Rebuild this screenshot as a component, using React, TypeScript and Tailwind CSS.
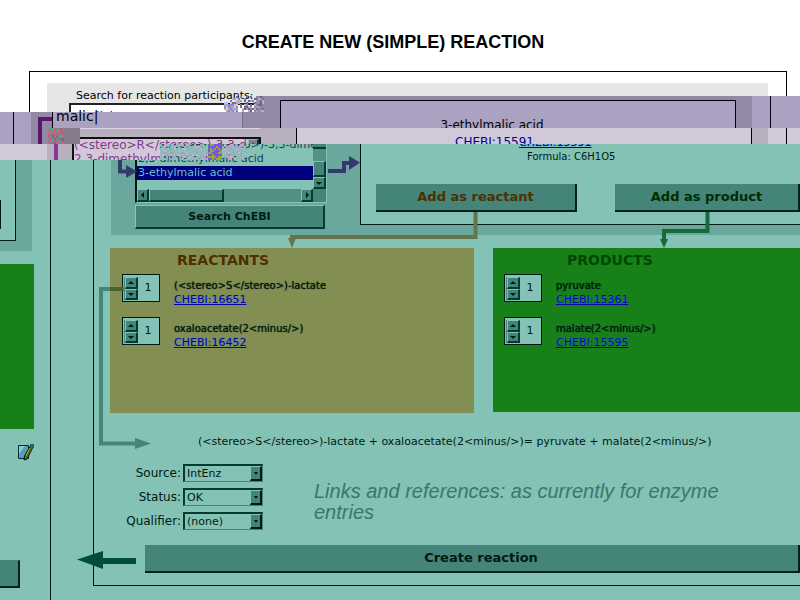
import type { ReactNode } from "react";

type Participant = { name: string; id: string };

const reactants: Participant[] = [
  { name: "(<stereo>S</stereo>)-lactate", id: "CHEBI:16651" },
  { name: "oxaloacetate(2<minus/>)", id: "CHEBI:16452" },
];
const products: Participant[] = [
  { name: "pyruvate", id: "CHEBI:15361" },
  { name: "malate(2<minus/>)", id: "CHEBI:15595" },
];

/* A patch of scrambled pixels, the same on every render. */
function Scramble({ w, h, colors, className, density = 1 }: { w: number; h: number; colors: string[]; className: string; density?: number }) {
  const cells: ReactNode[] = [];
  let seed = w * 31 + h * 7;
  const next = () => {
    seed = (seed * 1103515245 + 12345) % 2147483648;
    return seed / 2147483648;
  };
  for (let y = 0; y < h; y += 2) {
    for (let x = 0; x < w; x += 2) {
      const fill = colors[Math.floor(next() * colors.length)];
      if (next() < density) cells.push(<rect key={x + "-" + y} x={x} y={y} width="2" height="2" fill={fill} />);
    }
  }
  return (
    <svg aria-hidden="true" width={w} height={h} className={className} shapeRendering="crispEdges">
      {cells}
    </svg>
  );
}

function Triangle({ dir }: { dir: "up" | "down" | "left" | "right" }) {
  const d = { up: "M0 4L3 1L6 4Z", down: "M0 2L6 2L3 5Z", left: "M4 0L1 3L4 6Z", right: "M2 0L5 3L2 6Z" }[dir];
  return (
    <svg aria-hidden="true" width="6" height="6" className="shrink-0">
      <path d={d} fill="#001a12" />
    </svg>
  );
}

function SmallButton({ dir, label, className }: { dir: "up" | "down" | "left" | "right"; label: string; className: string }) {
  return (
    <button
      aria-label={label}
      className={
        "flex items-center justify-center overflow-hidden border-2 border-t-[#84c4b9] border-l-[#84c4b9] border-r-[#003c32] border-b-[#003c32] border-t border-l " +
        className
      }
    >
      <Triangle dir={dir} />
    </button>
  );
}

function ParticipantRow({ p }: { p: Participant }) {
  return (
    <div className="flex h-[43px] gap-[14px]">
      <div className="flex h-7 w-[38px] shrink-0 border border-[#001a12] bg-[#84c2b6] pl-px pt-0.5">
        <div className="flex h-[23px] w-3.5 flex-col border-l border-[#458478]">
          <SmallButton dir="up" label={"Increase " + p.name} className="h-3 w-[13px] bg-[#458478]" />
          <SmallButton dir="down" label={"Decrease " + p.name} className="h-[11px] w-[13px] bg-[#458478]" />
        </div>
        <input aria-label={"Coefficient of " + p.name} defaultValue="1" className="h-5 w-5 bg-transparent text-center text-[11px] outline-none" />
      </div>
      <div className="pt-[5px] leading-[13px]">
        <div className="whitespace-nowrap text-[10px] leading-[14px] text-[#001a12] [text-shadow:0_0_1px_#001a12]">{p.name}</div>
        <a href="#chebi" className="block text-[11px] text-[#0008a0] underline [text-shadow:0_0_1px_#3d7cff]">
          {p.id}
        </a>
      </div>
    </div>
  );
}

function SelectRow({ id, label, value }: { id: string; label: string; value: string }) {
  return (
    <div className="flex h-6 items-center">
      <label htmlFor={id} className="w-[72px] pr-0.5 text-right text-[12px]">
        {label}
      </label>
      <div className="relative">
        <select
          id={id}
          className="block h-[18px] w-20 appearance-none border-2 border-r border-b border-t-[#003c32] border-l-[#003c32] border-r-[#458478] border-b-[#458478] bg-[#84c2b6] pl-0.5 text-[11px] leading-[14px] outline-none"
        >
          <option>{value}</option>
        </select>
        <span className="pointer-events-none absolute right-px top-0.5 flex h-[15px] w-3 items-center justify-center border-2 border-t border-l border-t-[#84c4b9] border-l-[#84c4b9] border-r-[#001a12] border-b-[#001a12] bg-[#458478]">
          <svg aria-hidden="true" width="4" height="3">
            <path d="M0 0H4L2 3Z" fill="#001a12" />
          </svg>
        </span>
      </div>
    </div>
  );
}

const bigButton =
  "h-7 border-r-2 border-b-2 border-[#00241c] bg-[#458478] text-center font-bold leading-[26px] whitespace-nowrap ";

export default function App() {
  return (
    <div className="flex min-h-screen flex-col overflow-hidden bg-white font-['DejaVu_Sans',sans-serif] text-[#001a12]">
      {/* Heading and the top of the outer frame */}
      <header className="h-28 overflow-hidden text-black">
        <h1 className="h-[71px] pr-[14px] pt-[30px] text-center font-['Liberation_Sans',sans-serif] text-[18px] font-bold leading-6">
          CREATE NEW (SIMPLE) REACTION
        </h1>
        <div className="ml-[29px] mr-[13px] border border-b-0 border-black pl-[17px] pr-[18px] pt-[11px]">
          <div className="bg-[#e6e6e6] pl-[22px] pt-[5px]">
            <label htmlFor="search" className="block h-[15px] pl-[7px] text-[11px] leading-[15px]">
              Search for reaction participants:
            </label>
            <input
              id="search"
              defaultValue="malic|"
              className="block h-6 w-[190px] border-2 border-r border-[#222] bg-white pl-1.5 pt-1 text-[12px] outline-none"
            />
          </div>
        </div>
      </header>

      {/* First displaced band */}
      <div className="relative z-10 flex h-4 items-start bg-[#aaa2c0] text-black">
        <div className="flex h-8 w-20 shrink-0 bg-[#aaa2c0]">
          <div className="w-[14px] border-r border-[#001]" />
          <div className="w-[17px]" />
          <div className="w-[21px] bg-[#9289a5]" />
          <div className="relative w-7">
            <div className="h-4 whitespace-nowrap border-l border-black pl-[3px] text-[14px] leading-[9px]">malic|</div>
            <Scramble w={16} h={16} className="absolute -left-1 top-4" colors={["#c06a8c", "#5aa08c", "#8d7a8d", "#d05a70", "#7a6c80"]} />
            <div className="absolute left-3 top-4 h-4 w-4 bg-[#857b8c]" />
          </div>
          <svg aria-hidden="true" width="16" height="32" className="absolute left-[38px] top-0">
            <path d="M14 7H2V32" fill="none" stroke="#5c166f" strokeWidth="4" />
          </svg>
        </div>
        <div className="h-4 w-[163px] shrink-0 border-r border-[#777087]" />
        <div className="h-4 w-[13px] shrink-0 bg-[#9289a5]" />
        <div className="-mt-4 flex h-8 flex-1 bg-[#9289a5] pl-6 pt-1">
          <div className="flex-1 overflow-hidden border border-b-0 border-[#001] bg-[#aaa2c0] pr-8 pt-4 text-center text-[12px] leading-4">
            3-ethylmalic acid
          </div>
          <div className="w-4" />
          <div className="-mt-1 h-8 w-[19px] border-r border-[#001] bg-[#aaa2c0]" />
          <div className="-mt-1 h-8 w-[29px] bg-[#aaa2c0]" />
        </div>
        <Scramble w={34} h={16} density={0.6} className="absolute -top-4 left-[230px]" colors={["#8f86a4", "#b9b0c8", "#77708c", "#a79fba", "#6b6380"]} />
        <Scramble w={14} h={10} density={0.7} className="absolute -top-2.5 left-[224px]" colors={["#8b80e8", "#b0b080", "#c9c2ff"]} />
      </div>

      {/* Second displaced band */}
      <div className="flex h-4 bg-[#d1c9d9]">
        <div className="h-8 w-[296px] shrink-0 bg-[#b8b0be]">
          <div className="ml-[72px] h-[9px] w-[188px] border-t border-[#ddd6e4]" />
          <div className="ml-[72px] flex h-6 w-[189px] justify-between overflow-hidden border-2 border-b-0 border-[#111] bg-[#d1c9d9] text-[12px] leading-3 text-[#843a8c]">
            <div className="w-[174px] overflow-hidden whitespace-nowrap">{"(<stereo>R</stereo>)-3,3-dimethylmalic acid"}</div>
            <SmallButton dir="up" label="Scroll list up" className="h-3 w-[11px] bg-[#857b8c]" />
          </div>
        </div>
        <div className="flex-1 overflow-hidden border-x border-black pl-[158px] text-[12px] leading-7 text-[#000096]">CHEBI:15591</div>
        <div className="w-4 bg-[#b8b0be]" />
        <div className="w-[19px] border-r border-black" />
        <div className="w-[13px]" />
      </div>

      <main className="relative flex flex-1 bg-[#84c2b6]">
        {/* Leftover of the second band, lying over the main area */}
        <div className="absolute left-0 top-0 z-10 flex h-4 w-40 bg-[#d1c9d9]">
          <div className="w-[47px]" />
          <div className="w-[25px] bg-[#b8b0be] pl-[7px]">
            <div className="h-4 w-1 bg-[#843a8c]" />
          </div>
          <div className="flex-1 overflow-hidden whitespace-nowrap border-l-2 border-[#111] text-[12px] text-[#843a8c]">
            <div className="-mt-[5px] leading-3">{"(<stereo>R</stereo>)"}</div>
            <div className="leading-4">2,3-dimethylmalic acid</div>
          </div>
        </div>
        <Scramble
          w={86}
          h={16}
          density={0.6}
          className="absolute left-40 top-0 z-10"
          colors={["#b49cc4", "#c9a5c8", "#8fb8b8", "#7fc8b8", "#c8b0d0", "#a8a0c0", "#7cc4b8", "#bca8cc"]}
        />
        <Scramble w={14} h={16} className="absolute left-[208px] top-0 z-10" colors={["#7a50e8", "#a8a820", "#6a60d0", "#90a060"]} />

        {/* Strip at the left edge */}
        <aside className="w-[51px] shrink-0 border-r border-[#001a12]">
          <div className="h-[107px] w-8 bg-[#6aa89d]">
            <div className="h-[97px] w-4 border-r border-b border-[#001a12] bg-[#84c2b6] pt-14">
              <div className="h-[29px] w-px bg-[#001a12]" />
            </div>
          </div>
          <div className="mt-[13px] h-[165px] w-[34px] bg-[#178018]" />
          <svg aria-label="Edit" role="img" width="16" height="17" className="ml-[18px] mt-[15px]">
            <path d="M.5 1.5H10.5V14.5H.5Z" fill="#5b9db0" stroke="#002a38" />
            <path d="M1 2H7L1 10Z" fill="#8cc6dc" />
            <path d="M13 1L15 3L9 15L6 16L6.500 12Z" fill="#4d7018" stroke="#001a12" />
            <path d="M12 4L8 12" stroke="#a0b040" />
            <path d="M12 1H15V4" fill="none" stroke="#286068" strokeWidth="2" />
          </svg>
          <button aria-label="Submit" className="mt-[99px] block h-7 w-5 border-r-2 border-b-2 border-t border-[#00241c] border-t-[#458478] bg-[#458478]" />
        </aside>

        <div className="min-w-0 flex-1 pb-[14px] pl-[42px]">
          <div className="relative h-full border-b border-l border-[#001a12] pl-4">
            {/* Search results and the selected compound */}
            <section className="ml-px flex h-[91px] bg-[#6aa89d] pl-6">
              <div className="w-[192px] shrink-0">
                <div className="flex h-[59px] border-b border-l-2 border-r border-l-[#001a12] border-b-[#84c4b9] border-r-[#84c4b9] bg-[#84c2b6]">
                  <div className="flex min-w-0 flex-1 flex-col">
                    <div role="listbox" aria-label="Search results" className="h-[45px] overflow-hidden whitespace-nowrap text-[11px] leading-[14px] text-[#1c3a5c]">
                      <div role="option" aria-selected="false" className="-mt-1.5 pl-px">
                        {"(<stereo>R</stereo>)-3,3-dimethyl"}
                      </div>
                      <div role="option" aria-selected="false" className="pl-px">
                        2,3-dimethylmalic acid
                      </div>
                      <div role="option" aria-selected="true" className="bg-[#00007c] pl-px text-[#69bfd0]">
                        3-ethylmalic acid
                      </div>
                    </div>
                    <div className="flex h-[13px] bg-[#539185]">
                      <SmallButton dir="left" label="Scroll list left" className="w-3 bg-[#458478]" />
                      <div className="w-[75px] border border-r-2 border-b-2 border-[#84c4b9] border-r-[#003c32] border-b-[#003c32] bg-[#458478]" />
                      <div className="flex-1" />
                      <SmallButton dir="right" label="Scroll list right" className="w-3 bg-[#458478]" />
                    </div>
                  </div>
                  <div className="flex w-[13px] flex-col bg-[#458478]">
                    <div className="h-[5px] border-b-2 border-[#003c32]" />
                    <div className="flex-1 bg-[#539185]" />
                    <div className="h-4 border border-r-2 border-b-2 border-[#84c4b9] border-r-[#003c32] border-b-[#003c32]" />
                    <SmallButton dir="down" label="Scroll list down" className="h-3 bg-[#458478]" />
                    <div className="h-[13px]" />
                  </div>
                </div>
                <button className="mt-[2px] block h-6 w-[190px] border-2 border-t border-l border-[#003c32] border-t-[#84c4b9] border-l-[#84c4b9] bg-[#458478] text-[11px] font-bold leading-5">
                  Search ChEBI
                </button>
              </div>
              <div className="ml-[33px] h-[81px] min-w-0 flex-1 border-b border-l border-[#001a12] bg-[#84c2b6] pl-[15px]">
                <div className="h-10 text-[10px]">
                  <div className="h-[5px] overflow-hidden pl-[143px]">
                    <a href="#compound" className="-mt-2 block text-[11px] leading-[13px] text-[#0008a0] underline [text-shadow:0_0_1px_#3d7cff]">
                      CHEBI:15591
                    </a>
                  </div>
                  <div className="pl-[151px] leading-4">Formula: C6H1O5</div>
                </div>
                <div className="flex gap-[38px]">
                  <button className={bigButton + "w-[201px] shrink-0 text-[13px] text-[#4d3000]"}>Add as reactant</button>
                  <button className={bigButton + "flex-1 text-[13px] text-[#002c00]"}>Add as product</button>
                </div>
              </div>
            </section>

            {/* Both sides of the reaction */}
            <div className="mt-[13px] flex gap-[19px]">
              <section className="h-[165px] w-[364px] shrink-0 bg-[#838f52] pl-3 text-[#001a12]">
                <h2 className="h-[26px] pl-[67px] -ml-3 pt-1 text-[14px] font-bold leading-4 text-[#4d3000]">REACTANTS</h2>
                {reactants.map((p) => (
                  <ParticipantRow key={p.id} p={p} />
                ))}
              </section>
              <section className="h-[164px] flex-1 bg-[#178018] pl-[11px]">
                <h2 className="h-[26px] pl-[63px] pt-1 text-[14px] font-bold leading-4 text-[#004800]">PRODUCTS</h2>
                {products.map((p) => (
                  <ParticipantRow key={p.id} p={p} />
                ))}
              </section>
            </div>

            <p className="mt-[21px] whitespace-nowrap pl-[88px] text-[11px] leading-4">
              {"(<stereo>S</stereo>)-lactate + oxaloacetate(2<minus/>)= pyruvate + malate(2<minus/>)"}
            </p>

            <div className="mt-[11px] flex pl-px">
              <div className="w-[203px] shrink-0">
                <SelectRow id="source" label="Source:" value="IntEnz" />
                <SelectRow id="status" label="Status:" value="OK" />
                <SelectRow id="qualifier" label="Qualifier:" value="(none)" />
              </div>
              <p className="w-[420px] pt-5 font-['Liberation_Sans',sans-serif] text-[20px] italic leading-[21px] text-[#38786c]">
                Links and references: as currently for enzyme entries
              </p>
            </div>

            <div className="mt-3 flex pl-[35px]">
              <button className={bigButton + "flex-1 pl-[19px] text-[13px]"}>Create reaction</button>
            </div>

            {/* Connecting arrows */}
            <svg aria-hidden="true" width="706" height="442" viewBox="94 144 706 442" className="pointer-events-none absolute left-0 top-0 overflow-visible">
              <path d="M475.500 212V237H292V241" fill="none" stroke="#64744f" strokeWidth="4" />
              <path d="M288 238H296L292 248Z" fill="#64744f" />
              <path d="M707.500 212V231H664V241" fill="none" stroke="#166c38" strokeWidth="4" />
              <path d="M660 239H668L664 248Z" fill="#166c38" />
              <path d="M124 289H101V443.500H137" fill="none" stroke="#458478" strokeWidth="4" />
              <path d="M110 287H123V291H110Z" fill="#46642c" />
              <path d="M135 438V449L151 443.500Z" fill="#458478" />
              <path d="M120 160V171.500H128" fill="none" stroke="#363870" strokeWidth="4" />
              <path d="M126 165V178L137 171.500Z" fill="#363870" />
              <path d="M328 171H344V163H351" fill="none" stroke="#363870" strokeWidth="4" />
              <path d="M349 156V170L360 162.500Z" fill="#363870" />
              <path d="M77 559.500L103 551V558H136V564H103V569Z" fill="#004c3f" />
            </svg>
          </div>
        </div>
      </main>
    </div>
  );
}
